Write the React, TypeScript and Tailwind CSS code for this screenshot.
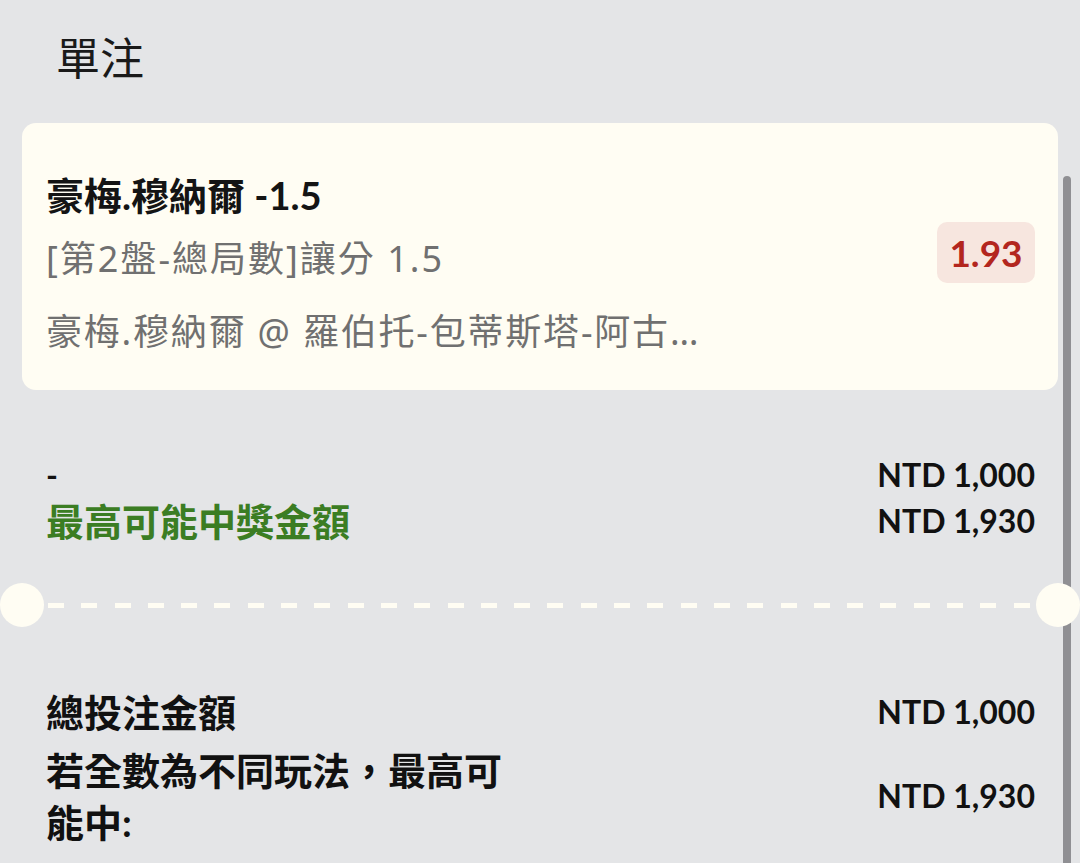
import React from 'react'

const CJK = "font-['Lato','Noto_Sans_CJK_TC',sans-serif]"
const NOTO = "font-['Noto_Sans','Noto_Sans_CJK_TC',sans-serif]"

const Divider: React.FC = () => (
  <div className="relative h-[44px] mt-[39px] flex items-center">
    <div className="absolute left-[-22px] top-0 h-[44px] w-[44px] rounded-full bg-[#fffdf3]" />
    <div className="absolute right-[-22px] top-0 h-[44px] w-[44px] rounded-full bg-[#fffdf3]" />
    <div className="ml-[26px] w-[982px] flex justify-between">
      {Array.from({ length: 30 }).map((_, i) => (
        <div key={i} className="h-[5px] w-4 bg-[#fffdf3]" />
      ))}
    </div>
  </div>
)

const AmountRow: React.FC<{ label: React.ReactNode; amount: string }> = ({ label, amount }) => (
  <div className="flex items-center justify-between">
    {label}
    <span className="text-[32px] leading-[46px] font-bold text-[#111] font-['Lato',sans-serif]">{amount}</span>
  </div>
)

export default function App() {
  return (
    <div className={`relative min-h-screen overflow-hidden bg-[#e4e5e7] ${CJK}`}>
      {/* scrollbar */}
      <div className="absolute right-[9px] top-[176px] bottom-0 w-[8px] rounded-t-full bg-[#8f8f93]" />

      <div className="px-[22px]">
        <h1 className="pl-[34px] pt-[32px] text-[44px] leading-[48px] font-normal text-[#1a1a1a] font-['Noto_Sans_CJK_TC',sans-serif]">單注</h1>

        {/* bet card */}
        <div className="mt-[43px] rounded-[14px] bg-[#fffdf3] pl-[24px] pr-[23px] pt-[50px] pb-[36px] flex justify-between">
          <div className="min-w-0 max-w-[662px]">
            <div className="text-[38px] leading-[44px] font-bold text-[#141414]">豪梅.穆納爾 -1.5</div>
            <div className={`mt-[20px] text-[36px] leading-[44px] tracking-[2px] text-[#707070] ${NOTO}`}>[第2盤-總局數]讓分 1.5</div>
            <div className={`mt-[29px] text-[36px] leading-[44px] tracking-[1.8px] text-[#707070] truncate ${NOTO}`}>
              豪梅.穆納爾 @ 羅伯托-包蒂斯塔-阿古斯特
            </div>
          </div>
          <div className="self-center mb-[22px] h-[61px] w-[98px] shrink-0 rounded-[10px] bg-[#f7e6df] flex items-center justify-center">
            <span className="text-[37px] font-bold text-[#b3261e] font-['Lato',sans-serif]">1.93</span>
          </div>
        </div>

        {/* selection summary */}
        <div className="mt-[62px] pl-[24px] pr-[23px]">
          <AmountRow label={<span className="text-[32px] leading-[46px] font-bold text-[#111]">-</span>} amount="NTD 1,000" />
          <AmountRow
            label={<span className="text-[38px] leading-[46px] font-bold text-[#3b7d23]">最高可能中獎金額</span>}
            amount="NTD 1,930"
          />
        </div>

        <Divider />

        {/* totals */}
        <div className="mt-[62px] pl-[24px] pr-[23px]">
          <AmountRow label={<span className="text-[38px] leading-[46px] font-bold text-[#111]">總投注金額</span>} amount="NTD 1,000" />
          <div className="mt-[9px]">
            <AmountRow
              label={
                <span className="max-w-[470px] text-[38px] leading-[52px] font-bold text-[#111]">
                  若全數為不同玩法，最高可能中:
                </span>
              }
              amount="NTD 1,930"
            />
          </div>
        </div>
      </div>
    </div>
  )
}
